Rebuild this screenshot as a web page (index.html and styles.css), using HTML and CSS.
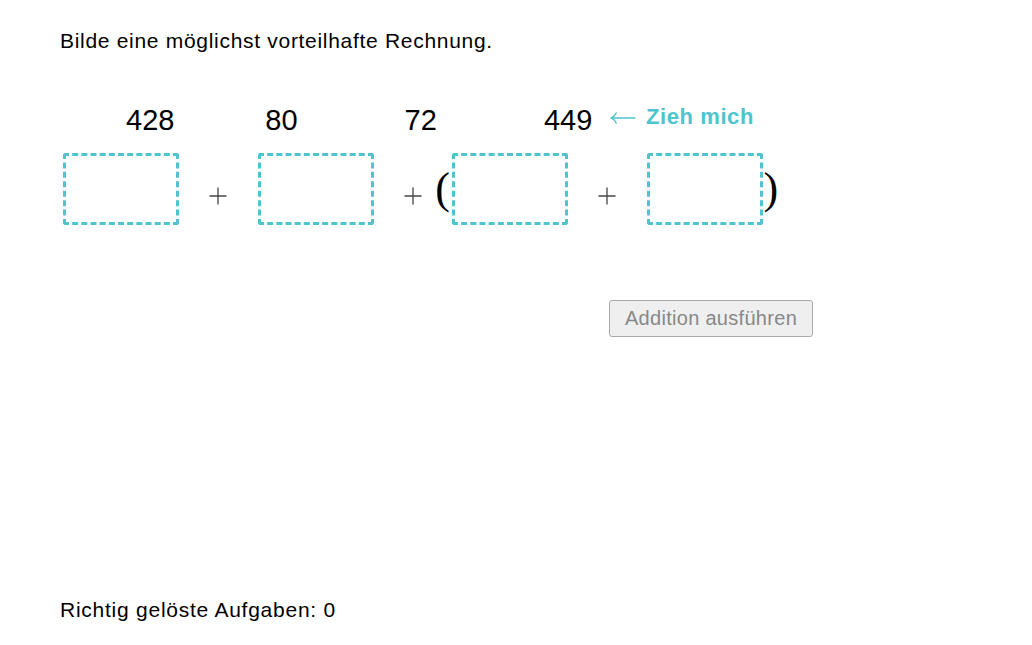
FILE: index.html
```html
<!DOCTYPE html>
<html lang="de">
<head>
<meta charset="utf-8">
<title>Vorteilhaft rechnen</title>
<link rel="stylesheet" href="styles.css">
</head>
<body>
<main class="page">
  <p class="task">Bilde eine möglichst vorteilhafte Rechnung.</p>
  <div class="numbers">
    <span class="num">428</span>
    <span class="num">80</span>
    <span class="num">72</span>
    <span class="num">449</span>
    <span class="hint">
      <svg class="arrow" width="26" height="12" viewBox="0 0 26 12" aria-hidden="true">
        <path d="M1 6 H25 M1 6 C4 4.8 5.5 3 6.3 0.8 M1 6 C4 7.2 5.5 9 6.3 11.2" fill="none" stroke="#4fc4cf" stroke-width="1.3" stroke-linecap="round"/>
      </svg>
      <span class="hint-text">Zieh mich</span>
    </span>
  </div>
  <div class="equation">
    <div class="slot"></div>
    <div class="op"><span></span><svg class="plus" width="18" height="18" viewBox="0 0 18 18" aria-hidden="true"><path d="M9 0.5 V17.5 M0.5 9 H17.5" stroke="#444" stroke-width="1.3"/></svg><span></span></div>
    <div class="slot"></div>
    <div class="op"><span></span><svg class="plus" width="18" height="18" viewBox="0 0 18 18" aria-hidden="true"><path d="M9 0.5 V17.5 M0.5 9 H17.5" stroke="#444" stroke-width="1.3"/></svg><span class="paren">(</span></div>
    <div class="slot"></div>
    <div class="op"><span></span><svg class="plus" width="18" height="18" viewBox="0 0 18 18" aria-hidden="true"><path d="M9 0.5 V17.5 M0.5 9 H17.5" stroke="#444" stroke-width="1.3"/></svg><span></span></div>
    <div class="slot"></div>
    <span class="paren close">)</span>
  </div>
  <div class="actions">
    <button class="btn" disabled>Addition ausführen</button>
  </div>
  <p class="score">Richtig gelöste Aufgaben: 0</p>
</main>
</body>
</html>
```
FILE: styles.css
```css
html, body {
  margin: 0;
  padding: 0;
  background: #fff;
}
body {
  font-family: "Liberation Sans", Arial, sans-serif;
  color: #000;
}
.page {
  box-sizing: border-box;
  height: 645px;
  padding: 0 0 0 60px;
  display: flex;
  flex-direction: column;
}
.task {
  margin: 28px 0 0 0;
  font-size: 21px;
  line-height: 26px;
  letter-spacing: 0.7px;
}
.numbers {
  margin-top: 51px;
  padding-left: 66px;
  display: flex;
  align-items: baseline;
  height: 30px;
}
.num {
  width: 139.3px;
  font-size: 29px;
  line-height: 30px;
}
.num:nth-child(4) {
  width: 66px;
}
.hint {
  display: flex;
  align-items: center;
  align-self: flex-start;
  margin-top: -1px;
  color: #4fc4cf;
  font-weight: bold;
  font-size: 22px;
  line-height: 26px;
  letter-spacing: 0.6px;
}
.arrow {
  display: block;
  margin: 2px 10px 0 0;
}
.equation {
  margin-top: 18px;
  padding-left: 3px;
  display: flex;
  align-items: center;
  height: 72px;
}
.slot {
  box-sizing: border-box;
  width: 116px;
  height: 72px;
  border: 3px dashed #4fc4cf;
  border-radius: 3px;
}
.op {
  width: 78.5px;
  display: grid;
  grid-template-columns: 1fr auto 1fr;
  align-items: center;
}
.plus {
  display: block;
  margin-top: 14px;
}
.paren {
  justify-self: end;
  font-family: "Liberation Serif", serif;
  font-size: 44px;
  line-height: 44px;
  margin-right: 2px;
}
.paren.close {
  margin: 0 0 0 1px;
}
.actions {
  margin-top: 75px;
  padding-left: 549px;
}
.btn {
  box-sizing: border-box;
  width: 204px;
  height: 37px;
  background: #efefef;
  border: 1px solid #aaa;
  border-radius: 3px;
  color: #888;
  font-family: "Liberation Sans", Arial, sans-serif;
  font-size: 20px;
  letter-spacing: 0.3px;
  padding: 0;
}
.score {
  margin: auto 0 22px 0;
  font-size: 21px;
  line-height: 26px;
  letter-spacing: 0.75px;
}
```
